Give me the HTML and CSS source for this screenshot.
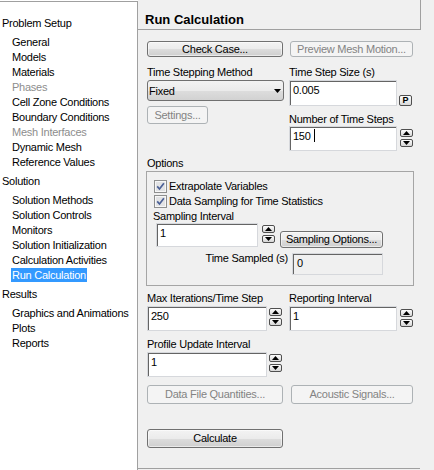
FILE: index.html
```html
<!DOCTYPE html>
<html>
<head>
<meta charset="utf-8">
<link rel="stylesheet" href="styles.css">
</head>
<body>
<div class="app">
  <nav class="tree">
    <div class="group">
      <div class="group-title">Problem Setup</div>
      <div class="item">General</div>
      <div class="item">Models</div>
      <div class="item">Materials</div>
      <div class="item item-off">Phases</div>
      <div class="item">Cell Zone Conditions</div>
      <div class="item">Boundary Conditions</div>
      <div class="item item-off">Mesh Interfaces</div>
      <div class="item">Dynamic Mesh</div>
      <div class="item">Reference Values</div>
    </div>
    <div class="group">
      <div class="group-title">Solution</div>
      <div class="item">Solution Methods</div>
      <div class="item">Solution Controls</div>
      <div class="item">Monitors</div>
      <div class="item">Solution Initialization</div>
      <div class="item">Calculation Activities</div>
      <div class="item"><span class="item-sel">Run Calculation</span></div>
    </div>
    <div class="group">
      <div class="group-title">Results</div>
      <div class="item">Graphics and Animations</div>
      <div class="item">Plots</div>
      <div class="item">Reports</div>
    </div>
  </nav>

  <main class="panel">
    <div class="panel-head"><h1 class="panel-title">Run Calculation</h1></div>
    <div class="panel-body">
      <div class="row">
        <div class="btn btn-wide">Check Case...</div>
        <div class="btn btn-off btn-right">Preview Mesh Motion...</div>
      </div>

      <div class="row row-time">
        <div class="col-left">
          <div class="label">Time Stepping Method</div>
          <div class="select">
            <span>Fixed</span>
            <svg class="select-arrow" width="7" height="4" viewBox="0 0 7 4"><path d="M0 0h7L3.5 4z" fill="#000"/></svg>
          </div>
          <div class="btn btn-off btn-settings">Settings...</div>
        </div>
        <div class="col-right">
          <div class="label">Time Step Size (s)</div>
          <div class="field field-first">
            <div class="input input-r input-tall">0.005</div>
            <span class="pbtn">P</span>
          </div>
          <div class="label label-steps">Number of Time Steps</div>
          <div class="field">
            <div class="input input-r">150<span class="caret"></span></div>
            <div class="spin">
              <span class="spin-btn"><svg width="7" height="4" viewBox="0 0 7 4"><path d="M0 4h7L3.5 0z" fill="#000"/></svg></span>
              <span class="spin-btn"><svg width="7" height="4" viewBox="0 0 7 4"><path d="M0 0h7L3.5 4z" fill="#000"/></svg></span>
            </div>
          </div>
        </div>
      </div>

      <div class="label label-options">Options</div>
      <div class="groupbox">
        <div class="check">
          <svg class="cb" width="13" height="13" viewBox="0 0 13 13"><rect x="0.5" y="0.5" width="12" height="12" fill="#f7f7f7" stroke="#8e8f8f"/><rect x="2" y="2" width="9" height="9" fill="#e2e3e5"/><path d="M3.2 6.4l2.3 2.6L9.9 3.3" fill="none" stroke="#4b6096" stroke-width="1.7"/></svg>
          <span>Extrapolate Variables</span>
        </div>
        <div class="check">
          <svg class="cb" width="13" height="13" viewBox="0 0 13 13"><rect x="0.5" y="0.5" width="12" height="12" fill="#f7f7f7" stroke="#8e8f8f"/><rect x="2" y="2" width="9" height="9" fill="#e2e3e5"/><path d="M3.2 6.4l2.3 2.6L9.9 3.3" fill="none" stroke="#4b6096" stroke-width="1.7"/></svg>
          <span>Data Sampling for Time Statistics</span>
        </div>
        <div class="label label-sampling">Sampling Interval</div>
        <div class="sampling-row">
          <div class="input input-sampling">1</div>
          <div class="spin spin-sampling">
            <span class="spin-btn"><svg width="7" height="4" viewBox="0 0 7 4"><path d="M0 4h7L3.5 0z" fill="#000"/></svg></span>
            <span class="spin-btn"><svg width="7" height="4" viewBox="0 0 7 4"><path d="M0 0h7L3.5 4z" fill="#000"/></svg></span>
          </div>
          <div class="btn btn-sampling">Sampling Options...</div>
        </div>
        <div class="sampled-row">
          <span class="label label-sampled">Time Sampled (s)</span>
          <div class="input input-readonly">0</div>
        </div>
      </div>

      <div class="row row-fields">
        <div class="col-left">
          <div class="label">Max Iterations/Time Step</div>
          <div class="field">
            <div class="input input-l">250</div>
            <div class="spin spin-l">
              <span class="spin-btn"><svg width="7" height="4" viewBox="0 0 7 4"><path d="M0 4h7L3.5 0z" fill="#000"/></svg></span>
              <span class="spin-btn"><svg width="7" height="4" viewBox="0 0 7 4"><path d="M0 0h7L3.5 4z" fill="#000"/></svg></span>
            </div>
          </div>
        </div>
        <div class="col-right">
          <div class="label">Reporting Interval</div>
          <div class="field">
            <div class="input input-r">1</div>
            <div class="spin">
              <span class="spin-btn"><svg width="7" height="4" viewBox="0 0 7 4"><path d="M0 4h7L3.5 0z" fill="#000"/></svg></span>
              <span class="spin-btn"><svg width="7" height="4" viewBox="0 0 7 4"><path d="M0 0h7L3.5 4z" fill="#000"/></svg></span>
            </div>
          </div>
        </div>
      </div>

      <div class="row row-profile">
        <div class="col-left">
          <div class="label">Profile Update Interval</div>
          <div class="field">
            <div class="input input-l">1</div>
            <div class="spin spin-l">
              <span class="spin-btn"><svg width="7" height="4" viewBox="0 0 7 4"><path d="M0 4h7L3.5 0z" fill="#000"/></svg></span>
              <span class="spin-btn"><svg width="7" height="4" viewBox="0 0 7 4"><path d="M0 0h7L3.5 4z" fill="#000"/></svg></span>
            </div>
          </div>
        </div>
      </div>

      <div class="row row-extra">
        <div class="btn btn-off btn-wide btn-tall">Data File Quantities...</div>
        <div class="btn btn-off btn-right btn-acoustic btn-tall">Acoustic Signals...</div>
      </div>

      <div class="row row-calc">
        <div class="btn btn-wide btn-tall">Calculate</div>
      </div>
    </div>
  </main>
</div>
</body>
</html>
```

FILE: styles.css
```css
* { box-sizing: border-box; }

html, body {
  margin: 0;
  height: 100%;
}

body {
  font-family: "Liberation Sans", Arial, sans-serif;
  font-size: 11px;
  letter-spacing: -0.25px;
  color: #000;
  background: #fff;
  overflow: hidden;
}

.app {
  display: flex;
  height: 470px;
}

/* ---------- tree ---------- */
.tree {
  width: 138px;
  flex: none;
  margin-top: 1px;
  border-top: 1px solid #a0a0a0;
  border-right: 1px solid #a0a0a0;
  background: #fff;
  padding-top: 10px;
  line-height: 15px;
  white-space: nowrap;
}

.group-title {
  padding-left: 2px;
  margin: 4px 0;
}

.item {
  padding-left: 12px;
  height: 15px;
}

.item-off { color: #8d8d8d; }

.item-sel {
  display: inline-block;
  vertical-align: top;
  height: 14px;
  line-height: 14px;
  margin-left: -1px;
  padding: 0 1px;
  background: #3399ff;
  color: #fff;
}

/* ---------- panel ---------- */
.panel {
  flex: 1;
  background: #f0f0f0;
}

.panel-head {
  width: 283px;
  height: 30px;
  border-right: 1px solid #a0a0a0;
  border-bottom: 1px solid #a0a0a0;
  padding: 12px 0 0 7px;
}

.panel-title {
  margin: 0;
  font-size: 13px;
  font-weight: bold;
  line-height: 16px;
  letter-spacing: 0;
}

.panel-body {
  width: 282px;
  height: 439px;
  border-bottom: 1px solid #a0a0a0;
  padding: 11px 0 0 9px;
}

.row { display: flex; align-items: flex-start; }

.label {
  line-height: 13px;
  height: 13px;
  white-space: nowrap;
}

/* ---------- buttons ---------- */
.btn {
  height: 16px;
  border: 1px solid #707070;
  border-radius: 3px;
  background: linear-gradient(#f3f3f3 0%, #ebebeb 50%, #dddddd 51%, #cfcfcf 100%);
  box-shadow: inset 0 0 0 1px rgba(255, 255, 255, 0.55);
  text-align: center;
  line-height: 14px;
  white-space: nowrap;
  color: #000;
}

.btn-off {
  border-color: #adb2b5;
  background: #f4f4f4;
  box-shadow: none;
  color: #838383;
}

.btn-wide { width: 136px; }
.btn-tall { height: 19px; line-height: 17px; }

.btn-right {
  width: 123px;
  margin-left: 7px;
}

.btn-acoustic {
  width: 122px;
  margin-left: 8px;
}

.btn-settings {
  width: 61px;
  height: 18px;
  line-height: 16px;
  margin-top: 5px;
}

.btn-sampling {
  width: 103px;
  height: 17px;
  line-height: 15px;
  margin-left: 5px;
  margin-top: 8px;
}

/* ---------- time row ---------- */
.row-time { margin-top: 9px; }

.col-left { width: 136px; flex: none; }

.col-right {
  width: 124px;
  flex: none;
  margin-left: 6px;
}

.select {
  width: 137px;
  height: 21px;
  margin-top: 1px;
  border: 1px solid #707070;
  border-radius: 3px;
  background: linear-gradient(#f3f3f3 0%, #ebebeb 50%, #dddddd 51%, #d2d2d2 100%);
  display: flex;
  align-items: center;
  justify-content: space-between;
  padding: 0 2px 0 1px;
}

.select-arrow { display: block; }

.field {
  display: flex;
  align-items: flex-start;
  margin-top: 1px;
}

.field-first { align-items: flex-end; }

.input {
  height: 25px;
  background: #fff;
  border: 1px solid #d6d8dc;
  box-shadow: inset 1px 1px 0 #646464;
  padding: 2px 2px 0 3px;
  line-height: 14px;
  white-space: nowrap;
}

.input-r { width: 108px; }
.input-l { width: 120px; }
.input-tall { height: 26px; }

.caret {
  display: inline-block;
  vertical-align: top;
  width: 1px;
  height: 13px;
  margin-left: 3px;
  background: #000;
}

.pbtn {
  width: 13px;
  height: 11px;
  margin-left: 2px;
  border: 1px solid #4f4f4f;
  border-radius: 2px;
  background: linear-gradient(#fdfdfd, #d9d9d9);
  font-size: 9px;
  font-weight: bold;
  line-height: 9px;
  letter-spacing: 0;
  text-align: center;
}

.label-steps { margin-top: 7px; }
.label-steps + .field { margin-top: 0; }

/* ---------- spinner ---------- */
.spin {
  display: flex;
  flex-direction: column;
  gap: 2px;
  margin-left: 3px;
  margin-top: 3px;
}

.spin-l { margin-left: 2px; margin-top: 2px; }
.spin-sampling { margin-left: 4px; margin-top: 2px; }

.spin-btn {
  width: 13px;
  height: 8px;
  border: 1px solid #4f4f4f;
  border-radius: 2px;
  background: linear-gradient(#fdfdfd, #d6d6d6);
  display: flex;
  align-items: center;
  justify-content: center;
}

.spin-btn svg { display: block; }

/* ---------- options group ---------- */
.label-options { margin-top: 6px; }

.groupbox {
  width: 268px;
  margin-top: 1px;
  margin-left: -1px;
  border: 1px solid #a5a5a5;
  padding: 7px 0 10px 6px;
}

.check {
  display: flex;
  align-items: center;
  height: 15px;
  line-height: 15px;
  padding-left: 1px;
  white-space: nowrap;
}

.cb {
  display: block;
  flex: none;
  margin-right: 2px;
}

.label-sampling { margin-top: 1px; }

.sampling-row {
  display: flex;
  align-items: flex-start;
  padding-left: 3px;
}

.input-sampling {
  width: 102px;
  height: 24px;
}

.sampled-row {
  display: flex;
  align-items: flex-start;
  justify-content: flex-end;
  width: 230px;
  margin-top: 5px;
}

.label-sampled {
  margin-top: -1px;
  margin-right: 4px;
}

.input-readonly {
  width: 91px;
  height: 22px;
  background: #f0f0f0;
  padding-left: 4px;
}

/* ---------- lower rows ---------- */
.row-fields { margin-top: 6px; }
.row-profile { margin-top: 7px; }
.row-extra { margin-top: 8px; }
.row-calc { margin-top: 25px; }
```
